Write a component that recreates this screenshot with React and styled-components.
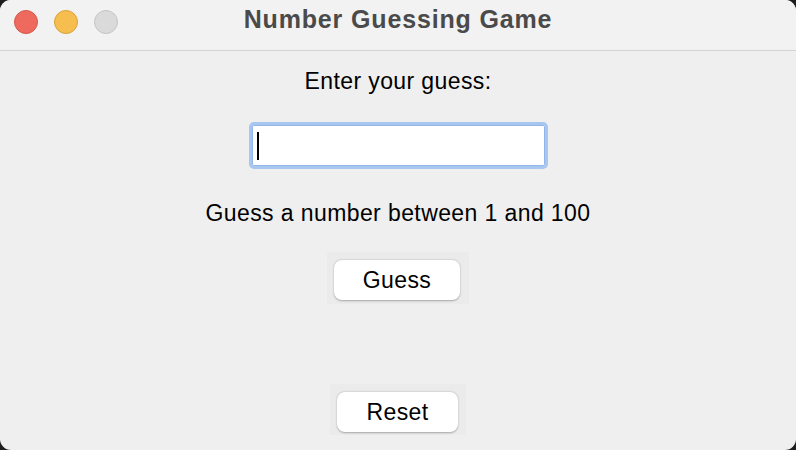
import React, { useState } from "react"
import styled, { createGlobalStyle } from "styled-components"

const Global = createGlobalStyle`
  html, body {
    margin: 0;
    padding: 0;
    background: #1e1e1e;
    font-family: "Liberation Sans", Arial, sans-serif;
  }
`

const Window = styled.div`
  width: 796px;
  height: 450px;
  border-radius: 11px;
  overflow: hidden;
  background: #efefef;
  display: flex;
  flex-direction: column;
`

const TitleBar = styled.div`
  height: 51px;
  flex-shrink: 0;
  background: #f2f2f2;
  border-bottom: 1px solid #d3d3d3;
  display: flex;
  align-items: flex-start;
  position: relative;
  box-sizing: border-box;
`

const Lights = styled.div`
  display: flex;
  gap: 16px;
  padding: 10px 0 0 14px;
`

const Light = styled.span`
  width: 24px;
  height: 24px;
  border-radius: 50%;
  box-sizing: border-box;
  background: ${p => p.color};
  border: 1px solid ${p => p.edge};
`

const Title = styled.div`
  position: absolute;
  left: 0;
  right: 0;
  top: 4px;
  text-align: center;
  font-size: 25px;
  line-height: 30px;
  letter-spacing: 0.85px;
  font-weight: bold;
  color: #4a4a4a;
  pointer-events: none;
`

const Body = styled.div`
  flex: 1;
  display: flex;
  flex-direction: column;
  align-items: center;
`

const Label = styled.div`
  font-size: 23px;
  letter-spacing: 0.4px;
  line-height: 28px;
  color: #000;
  margin-top: ${p => p.top}px;
`

const Field = styled.div`
  position: relative;
  margin-top: 27px;
  margin-left: 1px;
`

const Input = styled.input`
  display: block;
  width: 299px;
  height: 47px;
  box-sizing: border-box;
  border: 3px solid #a7c6f0;
  border-radius: 5px;
  box-shadow: inset 0 0 0 1px #93b5e8;
  outline: none;
  background: #fff;
  font-size: 23px;
  padding: 0 8px;
  font-family: inherit;
  caret-color: transparent;
`

const Caret = styled.span`
  position: absolute;
  left: 8px;
  top: 10px;
  width: 2px;
  height: 28px;
  background: #000;
  pointer-events: none;
`

const ButtonWell = styled.div`
  margin-top: ${p => p.top}px;
  background: #ebebeb;
  padding: ${p => p.pad};
  display: flex;
`

const Button = styled.button`
  width: ${p => p.w}px;
  height: 40px;
  background: #fff;
  border: none;
  border-radius: 8px;
  box-shadow: 0 0.5px 2px rgba(0, 0, 0, 0.3);
  font-size: 23px;
  letter-spacing: 0.4px;
  font-family: inherit;
  color: #000;
  padding: 0;
  cursor: pointer;
`

export default function App() {
  const [guess, setGuess] = useState("")

  return (
    <>
      <Global />
      <Window>
        <TitleBar>
          <Lights>
            <Light color="#ee6a5f" edge="#d5564b" />
            <Light color="#f5be4f" edge="#d9a23a" />
            <Light color="#dadada" edge="#c4c4c4" />
          </Lights>
          <Title>Number Guessing Game</Title>
        </TitleBar>
        <Body>
          <Label top={16}>Enter your guess:</Label>
          <Field>
            <Input value={guess} onChange={e => setGuess(e.target.value)} />
            {guess === "" && <Caret />}
          </Field>
          <Label top={30}>Guess a number between 1 and 100</Label>
          <ButtonWell top={25} pad="8px 9px 4px 7px">
            <Button w={126}>Guess</Button>
          </ButtonWell>
          <ButtonWell top={80} pad="8px 8px 3px 7px">
            <Button w={121}>Reset</Button>
          </ButtonWell>
        </Body>
      </Window>
    </>
  )
}
